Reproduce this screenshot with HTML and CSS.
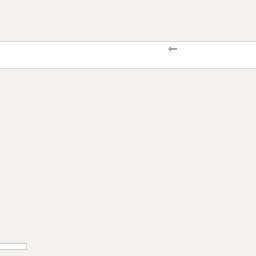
FILE: index.html
```html
<!DOCTYPE html>
<html lang="en">
<head>
<meta charset="UTF-8">
<title>Page</title>
<link rel="stylesheet" href="styles.css">
</head>
<body>
<div class="page">
    <div class="toolbar">
        <span class="back">
            <svg width="9" height="6" viewBox="0 0 9 6"><path d="M0 3 L3 0 V2 H9 V4 H3 V6 Z" fill="#a6a6a6"/></svg>
        </span>
    </div>
    <div class="spacer"></div>
    <div class="footer">
        <div class="field"></div>
    </div>
</div>
</body>
</html>
```
FILE: styles.css
```css
body {
    margin: 0;
    background-color: #f2f1ee;
    font-family: "Liberation Sans", Arial, sans-serif;
}
.page {
    height: 256px;
    display: flex;
    flex-direction: column;
}
.toolbar {
    margin-top: 41px;
    height: 26px;
    background-color: #fff;
    border-top: 1px solid #dcdcdc;
    border-bottom: 1px solid #dcdcdc;
    display: flex;
    align-items: flex-start;
}
.back {
    margin-left: 168px;
    margin-top: 4px;
    display: flex;
}
.spacer {
    flex: 1;
}
.footer {
    padding-bottom: 6px;
}
.field {
    width: 26px;
    height: 5px;
    background-color: #fff;
    border: 1px solid #cfcfcf;
    border-left: none;
}
```
